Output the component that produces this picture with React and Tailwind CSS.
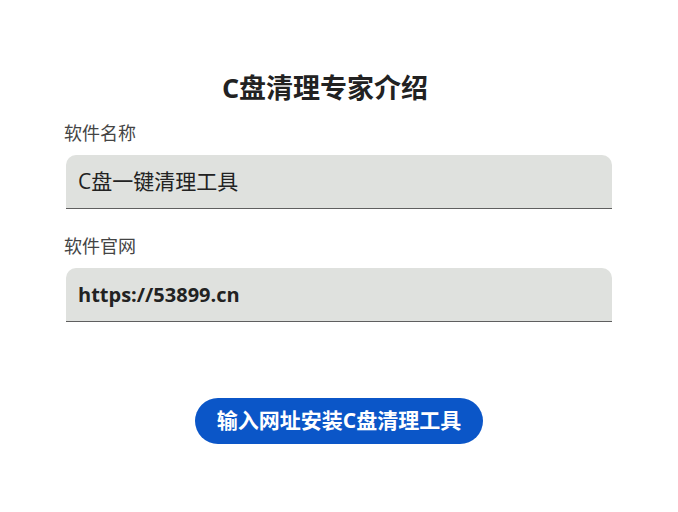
export default function App() {
  const font = { fontFamily: '"Open Sans", "Noto Sans CJK SC", sans-serif' };
  return (
    <div className="min-h-[512px] w-full bg-white" style={font}>
      <div className="mx-auto flex w-[546px] flex-col pt-[72px]">
        <h1 className="h-[32px] pr-[28px] text-center text-[27px] font-bold leading-[32px] text-[#222]">
          C盘清理专家介绍
        </h1>
        <div className="mt-[17px] ml-[-2px] h-[24px] text-[18px] leading-[24px] text-[#444]">软件名称</div>
        <div className="mt-[10px] flex h-[54px] items-center rounded-t-[10px] border-b-[1.5px] border-[#5f5f5f] bg-[#dfe1de] px-[12px] text-[21px] text-[#222]">
          C盘一键清理工具
        </div>
        <div className="mt-[25px] ml-[-2px] h-[24px] text-[18px] leading-[24px] text-[#444]">软件官网</div>
        <div className="mt-[10px] flex h-[54px] items-center rounded-t-[10px] border-b-[1.5px] border-[#5f5f5f] bg-[#dfe1de] px-[12px] text-[20px] font-bold text-[#222]">
          https://53899.cn
        </div>
        <div className="mt-[76px] flex justify-center">
          <button className="flex h-[46px] w-[288px] items-center justify-center rounded-full bg-[#0b56c8] text-[21px] font-bold text-white">
            输入网址安装C盘清理工具
          </button>
        </div>
      </div>
    </div>
  );
}
